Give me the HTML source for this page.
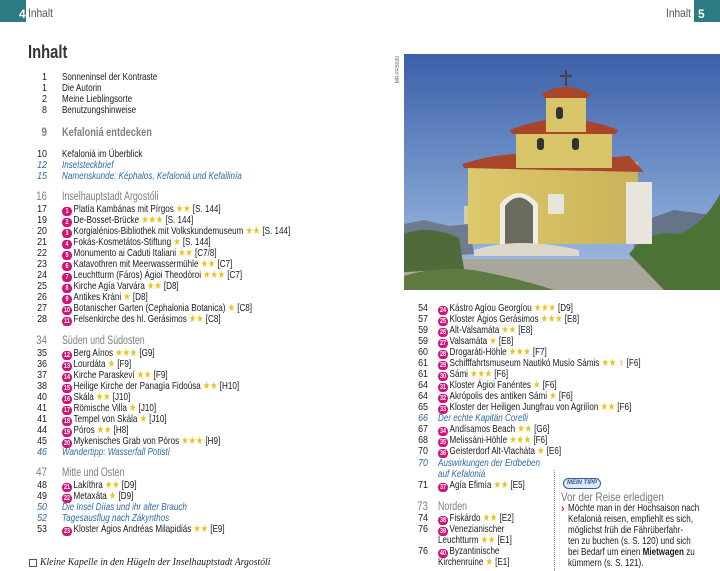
<!DOCTYPE html>
<html><head><meta charset="utf-8"><style>
*{margin:0;padding:0;box-sizing:border-box}
body{width:720px;height:571px;background:#fff;position:relative;overflow:hidden;font-family:"Liberation Sans",sans-serif;color:#1a1a1a}
.r{position:absolute;height:11px;line-height:11px;font-size:10.5px;white-space:nowrap}
.n{position:absolute;width:30px;text-align:right;left:0;transform:scaleX(.85);transform-origin:100% 50%}
.t{position:absolute;transform:scaleX(.77);transform-origin:0 50%}
.L .n{left:17px}.L .t{left:62px}
.R .n{left:398px}.R .t{left:438px}
.i{color:#2f6aa6;font-style:italic}
.h{color:#808080;font-size:11.5px}
.b{display:inline-block;width:13px;height:9px;border-radius:5px;background:#d0147a;color:#fff;font-size:7px;line-height:9px;text-align:center;font-weight:bold;vertical-align:-1px;margin-right:2px;font-style:normal}
.s{color:#e9c31c}
.tab{position:absolute;top:0;height:22px;background:#2b7b83}
</style></head><body>
<div class="tab" style="left:0;width:26px"></div>
<div style="position:absolute;left:19px;top:7px;font-size:12px;color:#fff;font-weight:bold">4</div>
<div style="position:absolute;left:28px;top:6px;font-size:12px;color:#555;transform:scaleX(.85);transform-origin:0 0">Inhalt</div>
<div class="tab" style="left:694px;width:26px"></div>
<div style="position:absolute;left:698px;top:7px;font-size:12px;color:#fff;font-weight:bold">5</div>
<div style="position:absolute;left:666px;top:6px;font-size:12px;color:#555;transform:scaleX(.85);transform-origin:0 0">Inhalt</div>
<div style="position:absolute;left:28px;top:42px;font-size:18px;font-weight:bold;color:#333;transform:scaleX(.82);transform-origin:0 0">Inhalt</div>

<div class="r L" style="top:72px"><span class="n">1</span><span class="t">Sonneninsel der Kontraste</span></div>
<div class="r L" style="top:83px"><span class="n">1</span><span class="t">Die Autorin</span></div>
<div class="r L" style="top:94px"><span class="n">2</span><span class="t">Meine Lieblingsorte</span></div>
<div class="r L" style="top:105px"><span class="n">8</span><span class="t">Benutzungshinweise</span></div>
<div class="r L h" style="top:127px;height:14px;font-weight:bold;font-size:12px"><span class="n">9</span><span class="t">Kefaloniá entdecken</span></div>
<div class="r L" style="top:149px"><span class="n">10</span><span class="t">Kefaloniá im Überblick</span></div>
<div class="r L i" style="top:160px"><span class="n">12</span><span class="t">Inselsteckbrief</span></div>
<div class="r L i" style="top:171px"><span class="n">15</span><span class="t">Namenskunde: Képhalos, Kefaloniá und Kefallinía</span></div>
<div class="r L h" style="top:192px"><span class="n">16</span><span class="t">Inselhauptstadt Argostóli</span></div>
<div class="r L" style="top:204px"><span class="n">17</span><span class="t"><i class="b">1</i>Platía Kambánas mit Pírgos <span class="s">★★</span> [S. 144]</span></div>
<div class="r L" style="top:215px"><span class="n">19</span><span class="t"><i class="b">2</i>De-Bosset-Brücke <span class="s">★★★</span> [S. 144]</span></div>
<div class="r L" style="top:226px"><span class="n">20</span><span class="t"><i class="b">3</i>Korgialénios-Bibliothek mit Volkskundemuseum <span class="s">★★</span> [S. 144]</span></div>
<div class="r L" style="top:237px"><span class="n">21</span><span class="t"><i class="b">4</i>Fokás-Kosmetátos-Stiftung <span class="s">★</span> [S. 144]</span></div>
<div class="r L" style="top:248px"><span class="n">22</span><span class="t"><i class="b">5</i>Monumento ai Caduti Italiani <span class="s">★★</span> [C7/8]</span></div>
<div class="r L" style="top:259px"><span class="n">23</span><span class="t"><i class="b">6</i>Katavothren mit Meerwassermühle <span class="s">★★</span> [C7]</span></div>
<div class="r L" style="top:270px"><span class="n">24</span><span class="t"><i class="b">7</i>Leuchtturm (Fáros) Ágioi Theodóroi <span class="s">★★★</span> [C7]</span></div>
<div class="r L" style="top:281px"><span class="n">25</span><span class="t"><i class="b">8</i>Kirche Agía Varvára <span class="s">★★</span> [D8]</span></div>
<div class="r L" style="top:292px"><span class="n">26</span><span class="t"><i class="b">9</i>Antikes Kráni <span class="s">★</span> [D8]</span></div>
<div class="r L" style="top:303px"><span class="n">27</span><span class="t"><i class="b">10</i>Botanischer Garten (Cephalonia Botanica) <span class="s">★</span> [C8]</span></div>
<div class="r L" style="top:314px"><span class="n">28</span><span class="t"><i class="b">11</i>Felsenkirche des hl. Gerásimos <span class="s">★★</span> [C8]</span></div>
<div class="r L h" style="top:336px"><span class="n">34</span><span class="t">Süden und Südosten</span></div>
<div class="r L" style="top:348px"><span class="n">35</span><span class="t"><i class="b">12</i>Berg Aínos <span class="s">★★★</span> [G9]</span></div>
<div class="r L" style="top:359px"><span class="n">36</span><span class="t"><i class="b">13</i>Lourdáta <span class="s">★</span> [F9]</span></div>
<div class="r L" style="top:370px"><span class="n">37</span><span class="t"><i class="b">14</i>Kirche Paraskeví <span class="s">★★</span> [F9]</span></div>
<div class="r L" style="top:381px"><span class="n">38</span><span class="t"><i class="b">15</i>Heilige Kirche der Panagía Fidoúsa <span class="s">★★</span> [H10]</span></div>
<div class="r L" style="top:392px"><span class="n">40</span><span class="t"><i class="b">16</i>Skála <span class="s">★★</span> [J10]</span></div>
<div class="r L" style="top:403px"><span class="n">41</span><span class="t"><i class="b">17</i>Römische Villa <span class="s">★</span> [J10]</span></div>
<div class="r L" style="top:414px"><span class="n">41</span><span class="t"><i class="b">18</i>Tempel von Skála <span class="s">★</span> [J10]</span></div>
<div class="r L" style="top:425px"><span class="n">44</span><span class="t"><i class="b">19</i>Póros <span class="s">★★</span> [H8]</span></div>
<div class="r L" style="top:436px"><span class="n">45</span><span class="t"><i class="b">20</i>Mykenisches Grab von Póros <span class="s">★★★</span> [H9]</span></div>
<div class="r L i" style="top:447px"><span class="n">46</span><span class="t">Wandertipp: Wasserfall Potistí</span></div>
<div class="r L h" style="top:468px"><span class="n">47</span><span class="t">Mitte und Osten</span></div>
<div class="r L" style="top:480px"><span class="n">48</span><span class="t"><i class="b">21</i>Lakíthra <span class="s">★★</span> [D9]</span></div>
<div class="r L" style="top:491px"><span class="n">49</span><span class="t"><i class="b">22</i>Metaxáta <span class="s">★</span> [D9]</span></div>
<div class="r L i" style="top:502px"><span class="n">50</span><span class="t">Die Insel Díias und ihr alter Brauch</span></div>
<div class="r L i" style="top:513px"><span class="n">52</span><span class="t">Tagesausflug nach Zákynthos</span></div>
<div class="r L" style="top:524px"><span class="n">53</span><span class="t"><i class="b">23</i>Kloster Ágios Andréas Milapidiás <span class="s">★★</span> [E9]</span></div>
<div style="position:absolute;left:29px;top:559px;width:8px;height:8px;border:1px solid #555"></div>
<div class="r" style="top:557px;left:40px;font-family:'Liberation Serif',serif;font-style:italic;font-size:11px"><span style="display:inline-block;transform:scaleX(.88);transform-origin:0 50%">Kleine Kapelle in den Hügeln der Inselhauptstadt Argostóli</span></div>

<div style="position:absolute;left:395px;top:56px;font-size:5px;color:#666;writing-mode:vertical-rl;transform:rotate(180deg)">MR-FR5020</div>
<svg style="position:absolute;left:404px;top:54px" width="316" height="236" viewBox="0 0 316 236">
<defs><linearGradient id="sk" x1="0" y1="0" x2="0" y2="1"><stop offset="0" stop-color="#3b5fa9"/><stop offset=".7" stop-color="#86a6d4"/><stop offset="1" stop-color="#a8bfdf"/></linearGradient>
<linearGradient id="yl" x1="0" y1="0" x2="1" y2="0"><stop offset="0" stop-color="#ddc86c"/><stop offset="1" stop-color="#c8b35a"/></linearGradient></defs>
<rect width="316" height="236" fill="url(#sk)"/>
<path d="M0 170 L20 166 L45 172 L65 170 L70 200 L0 205Z" fill="#6f7c8e"/>
<path d="M230 170 L270 156 L300 160 L316 158 L316 205 L230 205Z" fill="#66748a"/>
<path d="M0 205 L316 205 L316 236 L0 236Z" fill="#a9a69c"/>
<path d="M0 180 Q25 170 55 184 L60 215 L0 218Z" fill="#4f6b3a"/>
<path d="M0 222 Q40 210 80 218 Q120 226 150 236 L0 236Z" fill="#5c7a42"/>
<path d="M225 200 Q245 175 275 180 Q300 170 316 140 L316 236 L260 236 Q240 215 225 200Z" fill="#4c7236"/>
<rect x="60" y="152" width="70" height="18" fill="#d9cba5"/>
<rect x="64" y="108" width="170" height="82" fill="url(#yl)"/>
<path d="M58 110 Q115 92 165 106 L225 102 L240 118 L60 114Z" fill="#a8452a"/>
<rect x="112" y="74" width="96" height="40" fill="#d8c56a"/>
<path d="M106 76 Q160 54 214 76 L212 80 L108 80Z" fill="#a8452a"/>
<rect x="142" y="38" width="40" height="40" fill="#d8c56a"/>
<path d="M138 40 Q162 26 186 40 L184 44 L140 44Z" fill="#a8452a"/>
<line x1="162" y1="16" x2="162" y2="32" stroke="#444" stroke-width="2"/><line x1="156" y1="22" x2="168" y2="22" stroke="#444" stroke-width="2"/>
<rect x="222" y="128" width="26" height="62" fill="#e8e6dc"/>
<path d="M96 192 L96 150 Q115 128 134 150 L134 192Z" fill="#f0ece0"/>
<path d="M101 192 L101 152 Q115 135 129 152 L129 192Z" fill="#6b6a5f"/>
<path d="M70 196 Q115 182 175 196 L175 202 L70 202Z" fill="#ddd8cc"/>
<rect x="144" y="140" width="16" height="20" fill="#e8e4da"/>
<rect x="152" y="53" width="7" height="12" rx="3" fill="#333"/>
<rect x="133" y="84" width="7" height="12" rx="3" fill="#333"/>
<rect x="168" y="84" width="7" height="12" rx="3" fill="#333"/>
<rect x="150" y="180" width="0" height="0"/>
</svg>

<div class="r R" style="top:303px"><span class="n">54</span><span class="t"><i class="b">24</i>Kástro Agíou Georgíou <span class="s">★★★</span> [D9]</span></div>
<div class="r R" style="top:314px"><span class="n">57</span><span class="t"><i class="b">25</i>Kloster Ágios Gerásimos <span class="s">★★★</span> [E8]</span></div>
<div class="r R" style="top:325px"><span class="n">59</span><span class="t"><i class="b">26</i>Alt-Valsamáta <span class="s">★★</span> [E8]</span></div>
<div class="r R" style="top:336px"><span class="n">59</span><span class="t"><i class="b">27</i>Valsamáta <span class="s">★</span> [E8]</span></div>
<div class="r R" style="top:347px"><span class="n">60</span><span class="t"><i class="b">28</i>Drogaráti-Höhle <span class="s">★★★</span> [F7]</span></div>
<div class="r R" style="top:358px"><span class="n">61</span><span class="t"><i class="b">29</i>Schifffahrtsmuseum Nautikó Musío Sámis <span class="s">★★</span> <span style="color:#c98a4a">♀</span> [F6]</span></div>
<div class="r R" style="top:369px"><span class="n">61</span><span class="t"><i class="b">30</i>Sámi <span class="s">★★★</span> [F6]</span></div>
<div class="r R" style="top:380px"><span class="n">64</span><span class="t"><i class="b">31</i>Kloster Ágioi Fanéntes <span class="s">★</span> [F6]</span></div>
<div class="r R" style="top:391px"><span class="n">64</span><span class="t"><i class="b">32</i>Akrópolis des antiken Sámi <span class="s">★</span> [F6]</span></div>
<div class="r R" style="top:402px"><span class="n">65</span><span class="t"><i class="b">33</i>Kloster der Heiligen Jungfrau von Agrilíon <span class="s">★★</span> [F6]</span></div>
<div class="r R i" style="top:413px"><span class="n">66</span><span class="t">Der echte Kapitän Corelli</span></div>
<div class="r R" style="top:424px"><span class="n">67</span><span class="t"><i class="b">34</i>Andísamos Beach <span class="s">★★</span> [G6]</span></div>
<div class="r R" style="top:435px"><span class="n">68</span><span class="t"><i class="b">35</i>Melissáni-Höhle <span class="s">★★★</span> [F6]</span></div>
<div class="r R" style="top:446px"><span class="n">70</span><span class="t"><i class="b">36</i>Geisterdorf Alt-Vlacháta <span class="s">★</span> [E6]</span></div>
<div class="r R i" style="top:458px"><span class="n">70</span><span class="t">Auswirkungen der Erdbeben</span></div>
<div class="r R i" style="top:469px"><span class="t">auf Kefaloniá</span></div>
<div class="r R" style="top:480px"><span class="n">71</span><span class="t"><i class="b">37</i>Agía Efimía <span class="s">★★</span> [E5]</span></div>
<div class="r R h" style="top:502px"><span class="n">73</span><span class="t">Norden</span></div>
<div class="r R" style="top:513px"><span class="n">74</span><span class="t"><i class="b">38</i>Fiskárdo <span class="s">★★</span> [E2]</span></div>
<div class="r R" style="top:524px"><span class="n">76</span><span class="t"><i class="b">39</i>Venezianischer</span></div>
<div class="r R" style="top:535px"><span class="t">Leuchtturm <span class="s">★★</span> [E1]</span></div>
<div class="r R" style="top:546px"><span class="n">76</span><span class="t"><i class="b">40</i>Byzantinische</span></div>
<div class="r R" style="top:557px"><span class="t">Kirchenruine <span class="s">★</span> [E1]</span></div>

<div style="position:absolute;left:554px;top:470px;height:101px;border-left:1px dotted #888"></div>
<div style="position:absolute;left:563px;top:478px;width:38px;height:11px;border:1px solid #2f5f9a;border-radius:6px;background:#dfe8f4;font-size:6px;line-height:9px;text-align:center;color:#2f5f9a;font-style:italic;font-weight:bold">MEIN TIPP</div>
<div class="r" style="left:561px;top:490px;height:14px;line-height:14px;font-size:12px;color:#777"><span style="display:inline-block;transform:scaleX(.82);transform-origin:0 50%">Vor der Reise erledigen</span></div>
<div style="position:absolute;left:561px;top:503px;color:#d0147a;font-size:11px;font-weight:bold">›</div>
<div style="position:absolute;left:568px;top:503px;width:190px;font-size:10.5px;line-height:11px;transform:scaleX(.77);transform-origin:0 0">Möchte man in der Hochsaison nach<br>Kefaloniá reisen, empfiehlt es sich,<br>möglichst früh die Fährüberfahr-<br>ten zu buchen (s. S. 120) und sich<br>bei Bedarf um einen <b>Mietwagen</b> zu<br>kümmern (s. S. 121).</div>
</body></html>
